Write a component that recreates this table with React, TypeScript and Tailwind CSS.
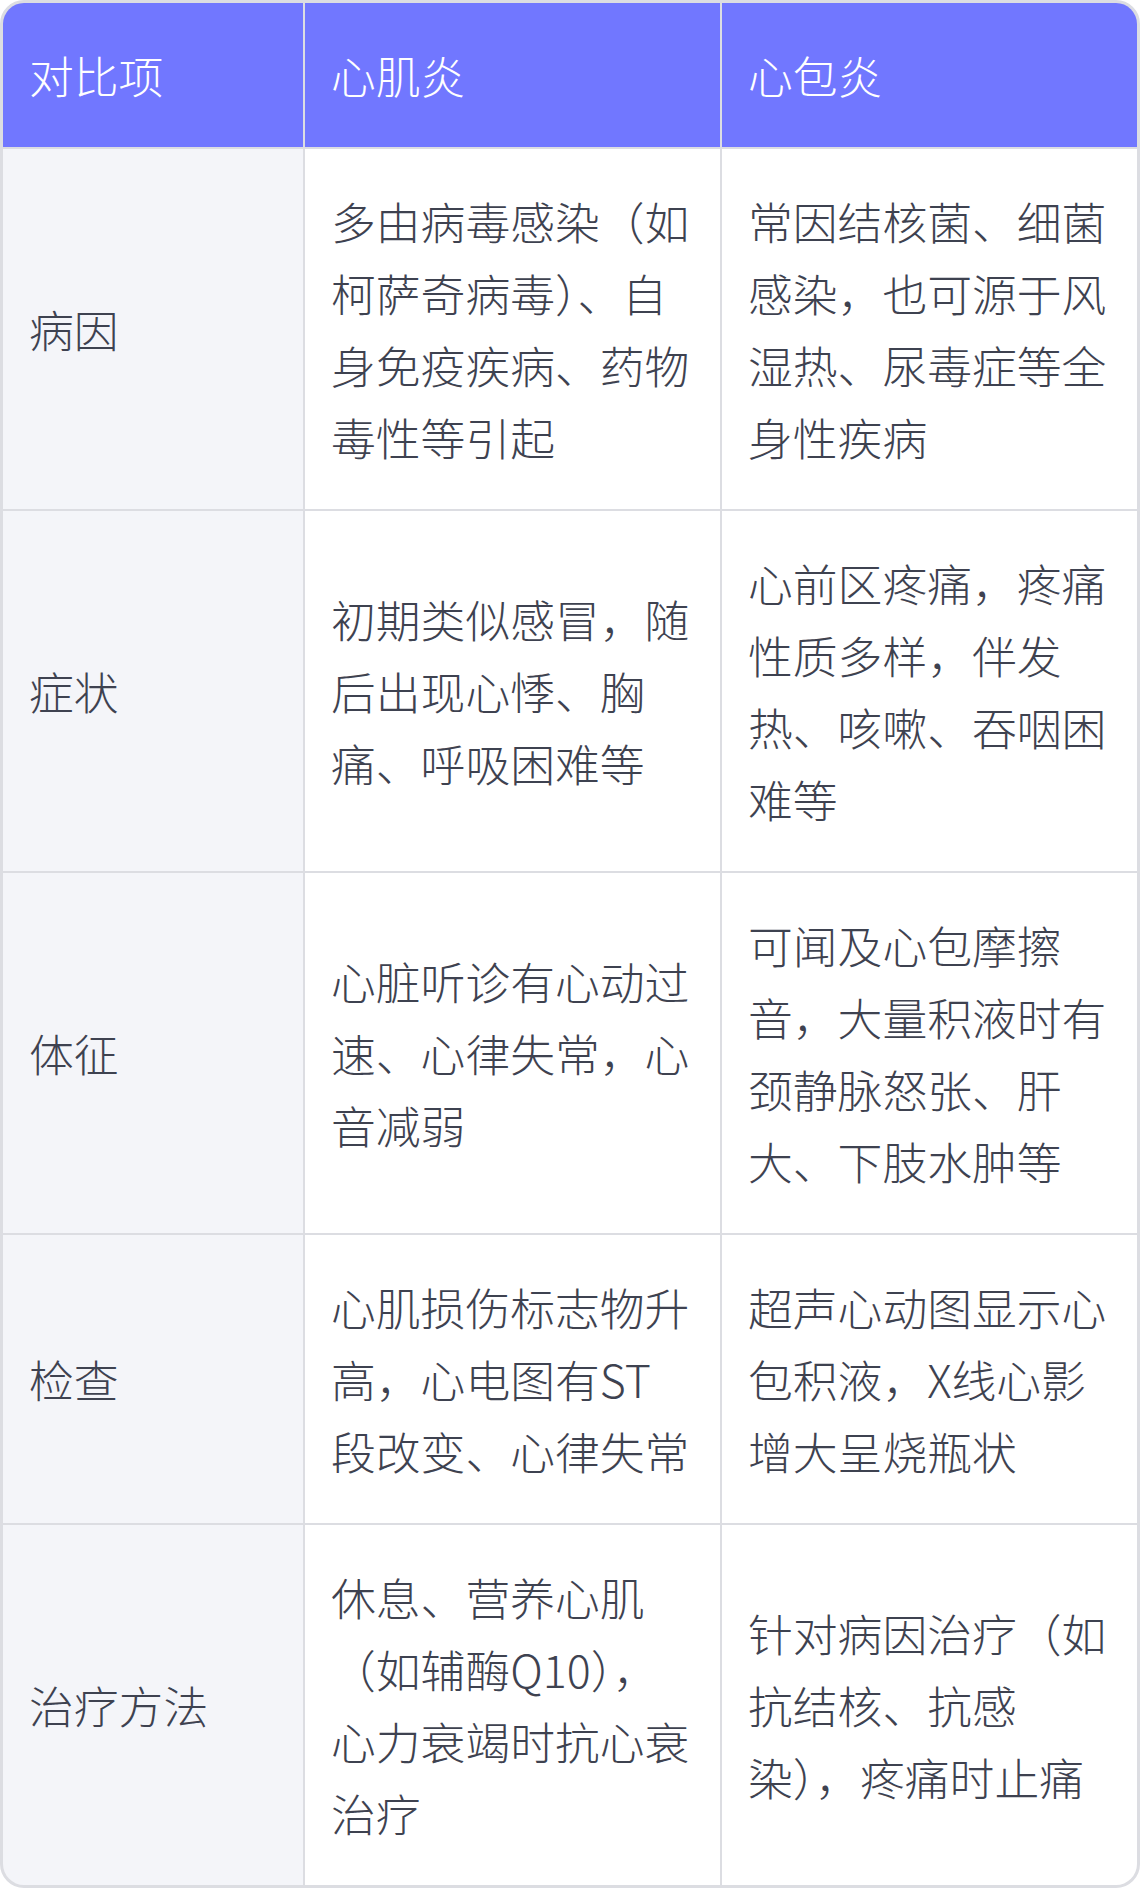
import React from "react";

const rows: { label: string; a: string; b: string }[] = [
  {
    label: "病因",
    a: "多由病毒感染（如柯萨奇病毒）、自身免疫疾病、药物毒性等引起",
    b: "常因结核菌、细菌感染，也可源于风湿热、尿毒症等全身性疾病",
  },
  {
    label: "症状",
    a: "初期类似感冒，随后出现心悸、胸痛、呼吸困难等",
    b: "心前区疼痛，疼痛性质多样，伴发热、咳嗽、吞咽困难等",
  },
  {
    label: "体征",
    a: "心脏听诊有心动过速、心律失常，心音减弱",
    b: "可闻及心包摩擦音，大量积液时有颈静脉怒张、肝大、下肢水肿等",
  },
  {
    label: "检查",
    a: "心肌损伤标志物升高，心电图有ST段改变、心律失常",
    b: "超声心动图显示心包积液，X线心影增大呈烧瓶状",
  },
  {
    label: "治疗方法",
    a: "休息、营养心肌（如辅酶Q10），心力衰竭时抗心衰治疗",
    b: "针对病因治疗（如抗结核、抗感染），疼痛时止痛",
  },
];

const Cell = ({
  children,
  head,
  side,
}: {
  children: React.ReactNode;
  head?: boolean;
  side?: boolean;
}) => (
  <div
    className={
      head
        ? "flex items-center bg-[#7177ff] pl-[26px] pr-[28px] py-[36px] text-white"
        : side
        ? "flex items-center bg-[#f4f5f9] pl-[26px] pr-[28px] py-[36px] text-[#3e4250]"
        : "flex items-center bg-white pl-[26px] pr-[28px] py-[36px] text-[#3e4250]"
    }
  >
    <span>{children}</span>
  </div>
);

export default function App() {
  return (
    <div className="w-[1140px] bg-white">
      <div
        className="grid grid-cols-[300px_415px_415px] gap-[2px] overflow-hidden rounded-[24px] border-[3px] border-[#dcdde2] bg-[#dcdde2] text-[44.8px] font-light leading-[72px]"
        style={{ fontFamily: '"Noto Sans CJK SC", "Noto Sans", sans-serif' }}
      >
        <Cell head>对比项</Cell>
        <Cell head>心肌炎</Cell>
        <Cell head>心包炎</Cell>
        {rows.map((r) => (
          <React.Fragment key={r.label}>
            <Cell side>{r.label}</Cell>
            <Cell>{r.a}</Cell>
            <Cell>{r.b}</Cell>
          </React.Fragment>
        ))}
      </div>
    </div>
  );
}
